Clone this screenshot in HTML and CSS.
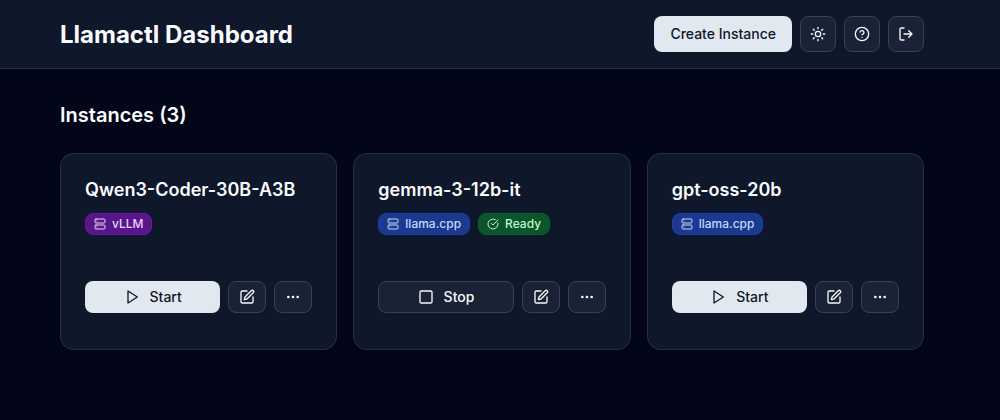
FILE: index.html
```html
<!DOCTYPE html>
<html lang="en">
<head>
<meta charset="utf-8">
<meta name="viewport" content="width=device-width, initial-scale=1">
<title>Llamactl Dashboard</title>
<link rel="stylesheet" href="styles.css">
</head>
<body>
<svg class="sprite" aria-hidden="true">
  <symbol id="server" viewBox="0 0 24 24"><rect width="20" height="8" x="2" y="2" rx="2"/><rect width="20" height="8" x="2" y="14" rx="2"/><path d="M6 6h.01M6 18h.01"/></symbol>
  <symbol id="check" viewBox="0 0 24 24"><path d="M21.801 10A10 10 0 1 1 17 3.335"/><path d="m9 11 3 3L22 4"/></symbol>
  <symbol id="play" viewBox="0 0 24 24"><path d="m6 3 14 9-14 9z"/></symbol>
  <symbol id="stop" viewBox="0 0 24 24"><rect width="18" height="18" x="3" y="3" rx="2"/></symbol>
  <symbol id="edit" viewBox="0 0 24 24"><path d="M12 3H5a2 2 0 0 0-2 2v14a2 2 0 0 0 2 2h14a2 2 0 0 0 2-2v-7"/><path d="M18.375 2.625a1 1 0 0 1 3 3l-9.013 9.014a2 2 0 0 1-.853.505l-2.873.84a.5.5 0 0 1-.62-.62l.84-2.873a2 2 0 0 1 .506-.852z"/></symbol>
  <symbol id="more" viewBox="0 0 24 24"><circle cx="12" cy="12" r="1"/><circle cx="19" cy="12" r="1"/><circle cx="5" cy="12" r="1"/></symbol>
  <symbol id="sun" viewBox="0 0 24 24"><circle cx="12" cy="12" r="4"/><path d="M12 2v2M12 20v2M4.93 4.93l1.41 1.41M17.66 17.66l1.41 1.41M2 12h2M20 12h2M6.34 17.66l-1.41 1.41M19.07 4.93l-1.41 1.41"/></symbol>
  <symbol id="help" viewBox="0 0 24 24"><circle cx="12" cy="12" r="10"/><path d="M9.09 9a3 3 0 0 1 5.83 1c0 2-3 3-3 3M12 17h.01"/></symbol>
  <symbol id="logout" viewBox="0 0 24 24"><path d="M9 21H5a2 2 0 0 1-2-2V5a2 2 0 0 1 2-2h4"/><path d="m16 17 5-5-5-5M21 12H9"/></symbol>
</svg>
<header class="header">
  <div class="container header-row">
    <h1 class="brand">Llamactl Dashboard</h1>
    <div class="toolbar">
      <button class="btn primary create" type="button">Create Instance</button>
      <button class="btn outline square" type="button" aria-label="Toggle theme"><svg class="icon"><use href="#sun"/></svg></button>
      <button class="btn outline square" type="button" aria-label="Help"><svg class="icon"><use href="#help"/></svg></button>
      <button class="btn outline square" type="button" aria-label="Log out"><svg class="icon"><use href="#logout"/></svg></button>
    </div>
  </div>
</header>
<main class="container main">
  <h2 class="heading">Instances (3)</h2>
  <div class="grid">
    <article class="card">
      <h3 class="name">Qwen3-Coder-30B-A3B</h3>
      <div class="badges">
        <span class="badge purple"><svg class="icon small"><use href="#server"/></svg>vLLM</span>
      </div>
      <div class="actions">
        <button class="btn primary wide" type="button"><svg class="icon"><use href="#play"/></svg>Start</button>
        <button class="btn outline tool" type="button" aria-label="Edit instance"><svg class="icon"><use href="#edit"/></svg></button>
        <button class="btn outline tool" type="button" aria-label="More actions"><svg class="icon"><use href="#more"/></svg></button>
      </div>
    </article>
    <article class="card">
      <h3 class="name">gemma-3-12b-it</h3>
      <div class="badges">
        <span class="badge blue"><svg class="icon small"><use href="#server"/></svg>llama.cpp</span>
        <span class="badge green"><svg class="icon small"><use href="#check"/></svg>Ready</span>
      </div>
      <div class="actions">
        <button class="btn outline wide" type="button"><svg class="icon"><use href="#stop"/></svg>Stop</button>
        <button class="btn outline tool" type="button" aria-label="Edit instance"><svg class="icon"><use href="#edit"/></svg></button>
        <button class="btn outline tool" type="button" aria-label="More actions"><svg class="icon"><use href="#more"/></svg></button>
      </div>
    </article>
    <article class="card">
      <h3 class="name">gpt-oss-20b</h3>
      <div class="badges">
        <span class="badge blue"><svg class="icon small"><use href="#server"/></svg>llama.cpp</span>
      </div>
      <div class="actions">
        <button class="btn primary wide" type="button"><svg class="icon"><use href="#play"/></svg>Start</button>
        <button class="btn outline tool" type="button" aria-label="Edit instance"><svg class="icon"><use href="#edit"/></svg></button>
        <button class="btn outline tool" type="button" aria-label="More actions"><svg class="icon"><use href="#more"/></svg></button>
      </div>
    </article>
  </div>
</main>
</body>
</html>
```
FILE: styles.css
```css
* { box-sizing: border-box; }

body {
  margin: 0;
  background: #020618;
  color: #f8fafc;
  font-family: Inter, "Liberation Sans", sans-serif;
  font-optical-sizing: none;
}

h1, h2, h3 { margin: 0; }

.sprite { display: none; }

.container { padding: 0 76px 0 60px; }

.header {
  background: #0f172b;
  border-bottom: 1px solid rgb(255 255 255 / 10%);
}

.header-row {
  display: flex;
  align-items: center;
  justify-content: space-between;
  padding-top: 16px;
  padding-bottom: 16px;
}

.brand {
  font-size: 24px;
  line-height: 33px;
  font-weight: 700;
}

.toolbar, .badges, .actions {
  display: flex;
  gap: 8px;
}

.main {
  padding-top: 32px;
  padding-bottom: 32px;
}

.heading {
  margin-bottom: 24px;
  font-size: 20px;
  line-height: 28px;
  font-weight: 600;
}

.grid {
  display: grid;
  grid-template-columns: repeat(auto-fit, minmax(260px, 1fr));
  gap: 16px;
}

.card {
  padding: 24px 24px 36px;
  background: #0f172b;
  border: 1px solid rgb(255 255 255 / 10%);
  border-radius: 14px;
  box-shadow: 0 1px 3px rgb(0 0 0 / 10%);
}

.name {
  margin-bottom: 12px;
  font-size: 18px;
  line-height: 23px;
  font-weight: 600;
}

.badge {
  display: inline-flex;
  align-items: center;
  gap: 6px;
  padding: 2px 8px;
  border: 1px solid;
  border-radius: 8px;
  font-size: 12px;
  line-height: 16px;
  font-weight: 500;
}

.purple { background: #59168b; border-color: #6e11b0; color: #e9d4ff; }
.blue { background: #1c398e; border-color: #193cb8; color: #bedbff; }
.green { background: #0d542b; border-color: #016630; color: #b9f8cf; }

.actions { margin-top: 46px; }

.btn {
  display: inline-flex;
  align-items: center;
  justify-content: center;
  gap: 10px;
  height: 32px;
  padding: 0;
  border: 0;
  border-radius: 8px;
  font-family: inherit;
  font-size: 14px;
  line-height: 20px;
  font-weight: 500;
  cursor: pointer;
}

.primary { background: #e2e8f0; color: #0f172b; }

.outline {
  background: #1a2235;
  border: 1px solid #3a4152;
  color: #f8fafc;
  box-shadow: 0 1px 2px rgb(0 0 0 / 5%);
}

.create { height: 36px; padding: 0 16px; }
.square { width: 36px; height: 36px; }
.wide { flex: 1; }
.tool { width: 38px; }

.icon {
  flex: none;
  width: 16px;
  height: 16px;
  fill: none;
  stroke: currentColor;
  stroke-width: 2;
  stroke-linecap: round;
  stroke-linejoin: round;
}

.small { width: 12px; height: 12px; }
```
